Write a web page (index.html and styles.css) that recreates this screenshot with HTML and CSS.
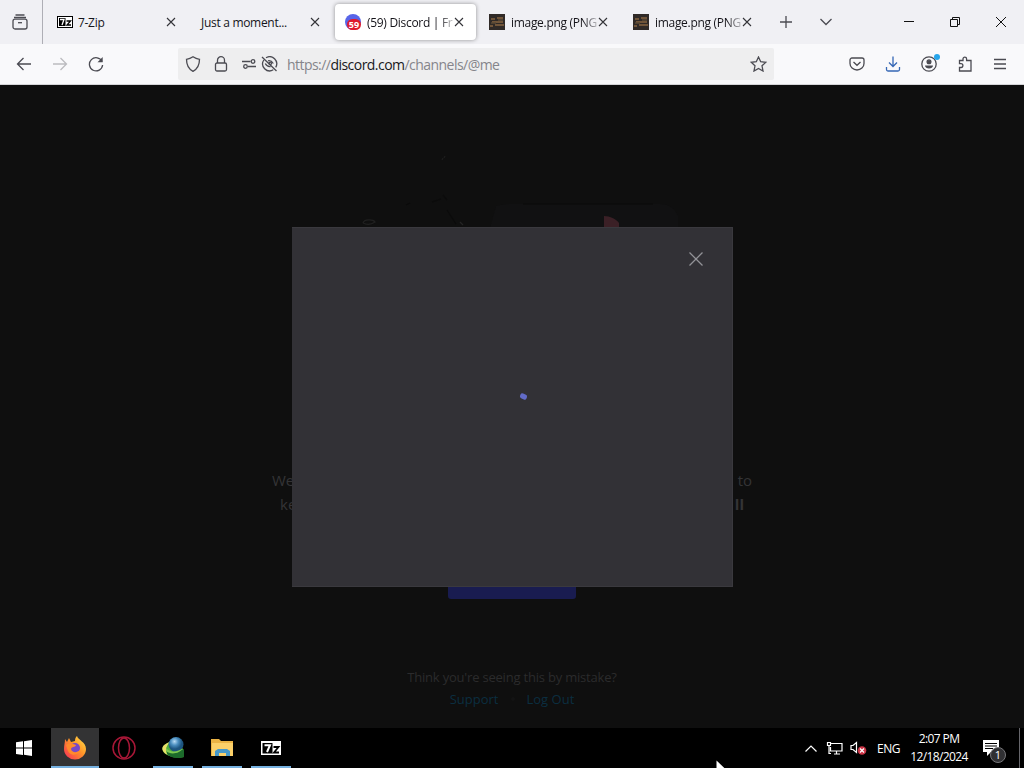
FILE: index.html
```
<!DOCTYPE html>
<html lang="en">
<head>
    <meta charset="UTF-8">
    <meta name="viewport" content="width=device-width, initial-scale=1.0">
    <title>(59) Discord | Friends</title>
    <link rel="stylesheet" href="styles.css">
</head>
<body>
    <svg class="defs" width="0" height="0">
        <symbol id="close" viewBox="0 0 10 10"><path d="M1 1L9 9M9 1L1 9"/></symbol>
        <symbol id="thumb" viewBox="0 0 16 16">
            <rect width="16" height="16" fill="#302a27" stroke="none"/>
            <path d="M2 5h4M8 4h6M3 8h11M6 11h9M1 12h3" stroke="#866440"/>
            <path d="M2 9h5M9 6h5" stroke="#5a4936"/>
        </symbol>
        <symbol id="zip" viewBox="0 0 22 16">
            <rect x="1" y="1" width="20" height="14" fill="#fff" stroke="none"/>
            <rect x="2.5" y="3" width="10" height="10.5" fill="#000" stroke="none"/>
            <path d="M4.5 5.2h5.5L7 12" stroke="#fff" stroke-width="2"/>
            <path d="M13.5 7h5l-4.5 5.5h5" stroke="#000" stroke-width="1.8"/>
        </symbol>
    </svg>

    <div class="tabs">
        <div class="view">
            <svg width="16" height="16" viewBox="0 0 16 16"><path d="M3.5 1h9M2 3.5h12"/><rect x="1" y="5.2" width="14" height="9.8" rx="2"/><path d="M6 8.7h4"/></svg>
        </div>
        <div class="tab">
            <svg width="16" height="12" viewBox="0 0 16 12"><rect width="16" height="12" fill="#000" stroke="none"/><rect x="1" y="1" width="14" height="10" fill="#fff" stroke="none"/><rect x="2" y="2" width="6.5" height="8" fill="#000" stroke="none"/><path d="M3 3.5h4L5 9" stroke="#fff"/><path d="M9.5 5h4l-3.5 4h4" stroke="#000"/></svg>
            <span class="title">7-Zip</span>
            <svg class="x" width="10" height="10"><use href="#close"/></svg>
        </div>
        <div class="tab">
            <span class="title">Just a moment...</span>
            <svg class="x" width="10" height="10"><use href="#close"/></svg>
        </div>
        <div class="tab active">
            <span class="discord"><b>59</b></span>
            <span class="title fade">(59) Discord | Fr</span>
            <svg class="x" width="10" height="10"><use href="#close"/></svg>
        </div>
        <div class="tab">
            <svg width="16" height="16"><use href="#thumb"/></svg>
            <span class="title fade">image.png (PNG</span>
            <svg class="x" width="10" height="10"><use href="#close"/></svg>
        </div>
        <div class="tab">
            <svg width="16" height="16"><use href="#thumb"/></svg>
            <span class="title fade">image.png (PNG</span>
            <svg class="x" width="10" height="10"><use href="#close"/></svg>
        </div>
        <svg class="plus" width="12" height="12" viewBox="0 0 12 12"><path d="M6 0v12M0 6h12"/></svg>
        <svg class="down" width="12" height="8" viewBox="0 0 12 8"><path d="M.5 1L6 6.5 11.5 1"/></svg>
        <div class="window">
            <svg width="12" height="12" viewBox="0 0 12 12"><path d="M1 5.5h10"/></svg>
            <svg width="12" height="12" viewBox="0 0 12 12"><path d="M1.5 3.5h7v7h-7zM3.5 3.5v-2h7v7h-2"/></svg>
            <svg width="12" height="12" viewBox="0 0 12 12"><path d="M1 1l10 10M11 1L1 11"/></svg>
        </div>
    </div>

    <div class="nav">
        <div class="history">
            <svg width="16" height="16" viewBox="0 0 16 16"><path d="M15 8H1.5M7.5 2L1.5 8l6 6"/></svg>
            <svg class="off" width="16" height="16" viewBox="0 0 16 16"><path d="M1 8h13.5M8.5 2l6 6-6 6"/></svg>
            <svg width="16" height="16" viewBox="0 0 16 16"><path d="M14 5.5A6.6 6.6 0 1 0 14.6 9"/><path d="M14.7 1v5.3H9.5z" fill="#4b4b52" stroke="none"/></svg>
        </div>
        <div class="url">
            <svg width="16" height="16" viewBox="0 0 16 16"><path d="M8 .8C6 2.2 4 3 1.5 3.3c0 5.5 1.5 9.5 6.5 12 5-2.5 6.5-6.5 6.5-12C12 3 10 2.2 8 .8z"/></svg>
            <svg class="lock" width="14" height="16" viewBox="0 0 14 16"><rect x="1.5" y="7" width="11" height="8" rx="1.5"/><path d="M3.5 7V4.2a3.5 3.5 0 0 1 7 0V7"/></svg>
            <svg class="perm" width="16" height="12" viewBox="0 0 16 12"><path d="M1 3.5h8.5M7 8.5h8"/><circle cx="12" cy="3.5" r="1.8"/><circle cx="4.5" cy="8.5" r="1.8"/></svg>
            <svg class="eye" width="17" height="16" viewBox="0 0 17 16"><path d="M5 1.800a7 7 0 0 1 9.700 9.500M2.800 4a7 7 0 0 0 9.500 9.800M1 1l14.500 14M7 4.800c2-.4 4 .6 5.300 2.700M4.300 7.500c1 2 3 3.300 5.200 3"/><circle cx="9.300" cy="7.300" r="1.200"/></svg>
            <span class="address">https://<b>discord.com</b>/channels/@me</span>
            <svg width="17" height="16" viewBox="0 0 17 16"><path d="M8.500 1l2.200 4.700 5.100.6-3.800 3.500 1 5.200-4.500-2.600L4 15l1-5.200-3.800-3.500 5.100-.6z"/></svg>
        </div>
        <div class="tools">
            <svg width="16" height="16" viewBox="0 0 16 16"><path d="M3 2h10a2 2 0 0 1 2 2v3.500a7 6.500 0 0 1-14 0V4a2 2 0 0 1 2-2z"/><path d="M4.500 6L8 9.300 11.500 6"/></svg>
            <svg class="blue" width="16" height="16" viewBox="0 0 16 16"><path d="M8 .5V10M4 6.500l4 4 4-4M1.500 11v2.500a1.500 1.500 0 0 0 1.500 1.500h10a1.500 1.500 0 0 0 1.500-1.500V11"/></svg>
            <span class="account">
                <svg width="16" height="16" viewBox="0 0 16 16"><circle cx="8" cy="8" r="7.200"/><circle cx="8" cy="5.800" r="1.900" fill="#4b4b52"/><path d="M4 9.500h8c0 2-2 3-4 3s-4-1-4-3z" fill="#4b4b52" stroke="none"/></svg>
                <i></i>
            </span>
            <svg width="16" height="16" viewBox="0 0 16 16"><path d="M6 4.500V3a1.800 1.800 0 0 1 3.600 0v1.500H14V15H2.500v-3.500H4a1.900 1.900 0 0 0 0-3.800H2.500V4.500z"/></svg>
            <svg width="14" height="16" viewBox="0 0 14 16"><path d="M1 3.500h12M1 8h12M1 12.500h12"/></svg>
        </div>
    </div>

    <div class="page">
        <svg class="art" width="330" height="90" viewBox="0 0 330 90">
            <path d="M146 54c4-1 8-2 14-2h150c9 0 14 4 18 12v26H136z" fill="#111112"/>
            <path d="M173 52h130" stroke="#0c0c0d"/>
            <path d="M254 64c6 0 12 3 15 7v18h-15z" fill="#3b2026"/>
            <path d="M13 71c1-4 10-4 12-1-3 2-8 3-12 1" stroke="#202020"/>
            <path d="M92 8l1-2M94 6l1-2" stroke="#1d1d1d"/>
            <path d="M56 53l4-2M82 50l9-3M97 58l9 14M93 43l4 5" stroke="#0b0b0b"/>
            <path d="M110 70l3 3" stroke="#242424"/>
        </svg>
        <div class="line first"><span>We</span><span>to</span></div>
        <div class="line second"><span>ke</span><b>ll</b></div>
        <div class="verify"></div>
        <div class="help">
            <p>Think you're seeing this by mistake?</p>
            <div class="links"><span>Support</span><i></i><span>Log Out</span></div>
        </div>
        <div class="modal">
            <svg class="dismiss" width="14" height="14" viewBox="0 0 14 14"><path d="M.5.5l13 13M13.500.5l-13 13"/></svg>
            <span class="spinner"></span>
        </div>
    </div>

    <div class="taskbar">
        <div class="app start">
            <svg width="16" height="16" viewBox="0 0 16 16"><path d="M0 2.300l7-1v6.300H0zM8 1.200L16 0v7.600H8zM0 8.600h7V15l-7-1zM8 8.600h8V16l-8-1.200z" fill="#fff"/></svg>
        </div>
        <div class="app open current">
            <svg width="24" height="24" viewBox="0 0 24 24">
                <defs><linearGradient id="fx" x1="1" y1="0" x2="0" y2="1"><stop offset="0" stop-color="#ffe84b"/><stop offset=".45" stop-color="#ff9428"/><stop offset="1" stop-color="#f5285b"/></linearGradient></defs>
                <path d="M2 3l2 3 2-4 2 4 4-1c0-3 1-4 2-5 1 4 9 6 9 13a11 10.500 0 0 1-22 0C1 9 2 7 2 3z" fill="url(#fx)"/>
                <circle cx="12" cy="12" r="5" fill="#7847c9"/>
                <path d="M3 9c4-3 7-1 10 0-1 3-4 1-5 4 1 4 6 4 9 1-1 5-9 7-12 1z" fill="#ff8a2c"/>
            </svg>
        </div>
        <div class="app">
            <svg width="24" height="24" viewBox="0 0 24 24" class="opera"><circle cx="12" cy="12" r="11"/><ellipse cx="12" cy="12" rx="5.500" ry="10"/></svg>
        </div>
        <div class="app open">
            <svg width="24" height="24" viewBox="0 0 24 24">
                <defs><radialGradient id="globe" cx=".4" cy=".3"><stop offset="0" stop-color="#b9dcf5"/><stop offset=".5" stop-color="#4b8fc0"/><stop offset="1" stop-color="#1d5580"/></radialGradient></defs>
                <path d="M9 6C3 8 0 11 2 15c2 5 13 8 21 6l-1-8z" fill="#4fae3e"/>
                <path d="M9 6C3 8 0 11 2 15c1 2 3 3 5 4-3-3-3-8 2-13z" fill="#e9df68"/>
                <path d="M6 14c5 3 11 2 17-1v8c-7 2-13 1-17-3z" fill="#1c6b2b"/>
                <circle cx="15" cy="8.500" r="7.500" fill="url(#globe)"/>
                <path d="M5 12c4 5 12 4 17 0-3 6-13 7-17 3z" fill="#7cc84f"/>
            </svg>
        </div>
        <div class="app open">
            <svg width="22" height="18" viewBox="0 0 22 18">
                <path d="M0 0h8l2 2h12v15H0z" fill="#ebb344"/><path d="M1 4h21v13H1z" fill="#fbd069"/>
                <path d="M4 17v-5l3-2h9l3 2v5h-4v-3H8v3z" fill="#4798c8"/>
            </svg>
        </div>
        <div class="app open">
            <svg width="22" height="16"><use href="#zip"/></svg>
        </div>
        <div class="tray">
            <svg width="12" height="7" viewBox="0 0 12 7"><path d="M.5 6.500L6 1l5.500 5.500"/></svg>
            <svg class="net" width="17" height="14" viewBox="0 0 17 14"><path d="M5 2.500h11v7.500H4.500V6M8 13h6M10.500 10v3M1.500 1.500h3v3h-3zM3 4.500v8h2"/></svg>
            <svg class="sound" width="17" height="14" viewBox="0 0 17 14"><path d="M1 4.500h2l3.500-3v10l-3.500-3H1z"/><circle cx="12" cy="9.500" r="4.300" fill="#cd3446" stroke="none"/><path d="M10 7.500l4 4M14 7.500l-4 4"/></svg>
            <span class="lang">ENG</span>
            <div class="clock"><span>2:07 PM</span><span>12/18/2024</span></div>
            <div class="note">
                <svg width="18" height="16" viewBox="0 0 18 16"><path d="M1 0h16v12H9l-4 4v-4H1z" fill="#fff" stroke="none"/><path d="M3 3.500h12M3 6h12M3 8.500h8" stroke="#000"/></svg>
                <b>1</b>
            </div>
        </div>
    </div>
    <svg class="cursor" width="12" height="19" viewBox="0 0 12 19"><path d="M.5.5v16l4-4 3 6 2.500-1-3-6H12z" fill="#fff" stroke="none"/></svg>
</body>
</html>
```
FILE: styles.css
```
*{
  box-sizing: border-box;
}
body{
  margin: 0;
  width: 1024px;
  height: 768px;
  overflow: hidden;
  position: relative;
  background-color: black;
  font-family: "Open Sans", "Noto Sans", sans-serif;
  font-size: 12px;
}
svg{
  display: block;
  flex: none;
  fill: none;
  stroke: #4b4b52;
  stroke-width: 1.3;
}
.defs{
  position: absolute;
}

/* tab strip */
.tabs{
  display: flex;
  align-items: center;
  height: 44px;
  background-color: #f0f0f4;
}
.view{
  display: flex;
  align-items: center;
  width: 43px;
  height: 44px;
  padding-left: 12px;
  margin-right: 2px;
  border-right: 1px solid #aeaeb5;
}
.tab{
  display: flex;
  align-items: center;
  width: 141px;
  height: 36px;
  margin: 0 1px 0 2px;
  padding: 0 12px 0 10px;
  gap: 5px;
  border-radius: 4px;
  color: #15141a;
}
.active{
  background-color: white;
  box-shadow: 0 0 4px rgba(0,0,0,0.4);
}
.title{
  flex: 1;
  min-width: 0;
  white-space: nowrap;
  font-size: 12px;
  letter-spacing: -0.3px;
}
.fade{
  -webkit-mask-image: linear-gradient(to right, black 72px, transparent 90px);
  mask-image: linear-gradient(to right, black 72px, transparent 90px);
  margin-left: 1px;
  margin-right: -4px;
}
.x{
  stroke: #333338;
  stroke-width: 1.1;
}
.discord{
  position: relative;
  flex: none;
  width: 16px;
  height: 16px;
  border-radius: 8px;
  background-color: #5865e8;
}
.discord b{
  position: absolute;
  left: 2px;
  top: 5px;
  width: 14px;
  height: 11px;
  border-radius: 6px;
  background-color: #e01b2c;
  color: white;
  font-size: 9px;
  line-height: 11px;
  text-align: center;
}
.plus{
  margin-left: 15px;
}
.down{
  margin-left: 28px;
}
.window{
  display: flex;
  gap: 34px;
  margin-left: auto;
  padding-right: 17px;
}
.window svg{
  stroke: #111;
  stroke-width: 1;
}

/* toolbar */
.nav{
  display: flex;
  align-items: center;
  height: 41px;
  background-color: #f9f9fb;
  border-bottom: 1px solid #d5d5d8;
}
.history{
  display: flex;
  gap: 20px;
  width: 178px;
  padding-left: 16px;
}
.off{
  opacity: 0.35;
}
.url{
  display: flex;
  align-items: center;
  width: 596px;
  height: 32px;
  padding: 0 7px;
  background-color: #eeeeef;
  border-radius: 2px;
}
.lock{
  margin-left: 13px;
}
.perm{
  margin-left: 13px;
}
.eye{
  margin-left: 4px;
}
.address{
  flex: 1;
  margin-left: 9px;
  padding-top: 1px;
  font-size: 14px;
  letter-spacing: -0.54px;
  color: #85858b;
}
.address b{
  font-weight: normal;
  color: #18181c;
}
.tools{
  display: flex;
  align-items: center;
  gap: 20px;
  margin-left: auto;
  padding-right: 17px;
}
.blue{
  stroke: #3567b5;
}
.account{
  position: relative;
}
.account i{
  position: absolute;
  right: -3px;
  top: -2px;
  width: 6px;
  height: 6px;
  border-radius: 3px;
  background-color: #27a5eb;
}

/* discord page under the dark layer */
.page{
  position: relative;
  height: 643px;
  padding-top: 383px;
  background-color: #0f0f0f;
  overflow: hidden;
}
.art{
  position: absolute;
  left: 350px;
  top: 67px;
  stroke: none;
}
.line{
  display: flex;
  justify-content: space-between;
  margin: 0 auto;
  height: 24px;
  line-height: 24px;
  font-size: 15px;
  color: #343436;
}
.first{
  width: 480px;
}
.second{
  width: 464px;
}
.verify{
  width: 128px;
  height: 44px;
  margin: 39px auto 0;
  background-color: #191c50;
  border-radius: 3px;
}
.help{
  margin-top: 67px;
  text-align: center;
  font-size: 13px;
  color: #2b2b2c;
}
.help p{
  margin: 0;
  line-height: 22px;
  letter-spacing: -0.2px;
}
.links{
  display: flex;
  justify-content: center;
  align-items: center;
  line-height: 22px;
  color: #0b2e40;
  gap: 12px;
}
.links i{
  width: 4px;
  height: 4px;
  border-radius: 2px;
  background-color: #131314;
}
.modal{
  position: absolute;
  left: 292px;
  top: 142px;
  width: 441px;
  height: 360px;
  background-color: #323136;
  border: 1px solid #3a393e;
  border-left: none;
}
.dismiss{
  position: absolute;
  right: 29px;
  top: 24px;
  stroke: #929297;
}
.spinner{
  position: absolute;
  left: 228px;
  top: 166px;
  width: 7px;
  height: 5px;
  border-radius: 2px;
  transform: rotate(25deg);
  background-color: #626bc8;
}

/* windows taskbar */
.taskbar{
  display: flex;
  height: 40px;
  gap: 1px;
  background-color: black;
}
.app{
  display: flex;
  justify-content: center;
  align-items: center;
  width: 48px;
  height: 40px;
  border-bottom: 2px solid transparent;
  padding-top: 1px;
}
.app svg{
  stroke: none;
}
.start{
  margin-right: 2px;
}
.open{
  background: linear-gradient(#76b1e0, #76b1e0) center bottom / 40px 2px no-repeat;
  background-origin: border-box;
  background-clip: border-box;
}
.current{
  background-color: #333334;
  background-size: 48px 2px;
}
.app .opera{
  stroke: #a81737;
  stroke-width: 1.5;
}
.tray{
  display: flex;
  align-items: center;
  margin-left: auto;
  width: 215px;
  color: white;
  border-right: 1px solid #65656a;
  margin-right: 4px;
}
.tray svg{
  stroke: white;
  stroke-width: 1.2;
}
.net{
  margin-left: 9px;
}
.sound{
  margin-left: 7px;
}
.lang{
  width: 23px;
  margin-left: 10px;
  font-size: 12px;
  letter-spacing: -0.5px;
}
.clock{
  display: flex;
  flex-direction: column;
  align-items: center;
  width: 60px;
  margin-left: 9px;
  font-size: 12px;
  line-height: 18px;
  letter-spacing: -0.6px;
  white-space: nowrap;
}
.note{
  position: relative;
  margin-left: 13px;
}
.note b{
  position: absolute;
  left: 8px;
  top: 7px;
  width: 16px;
  height: 16px;
  border-radius: 8px;
  border: 1px solid #77777a;
  background-color: #303033;
  font-size: 11px;
  font-weight: normal;
  line-height: 14px;
  text-align: center;
}
.cursor{
  position: absolute;
  left: 716px;
  top: 760px;
}
```
